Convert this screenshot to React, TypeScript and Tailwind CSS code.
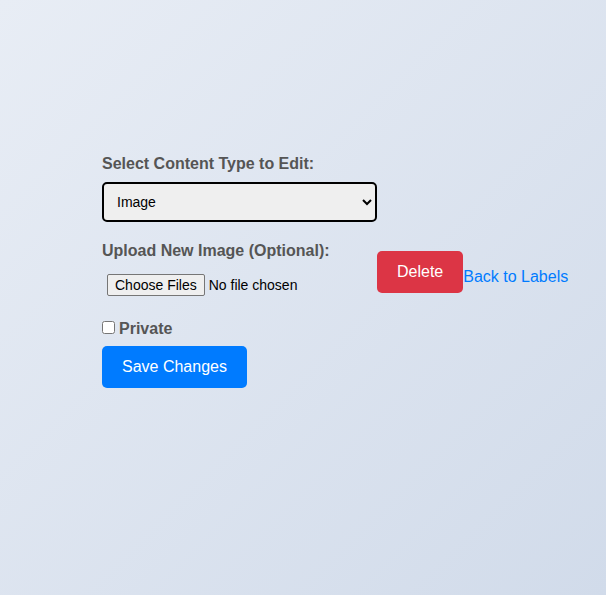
import React from "react";

export default function App() {
  return (
    <div
      className="min-h-screen w-full bg-[linear-gradient(135deg,#e8edf5_0%,#d1dbea_100%)] pl-[102px] pt-[155px]"
      style={{ fontFamily: '"Liberation Sans", Arial, sans-serif' }}
    >
      <div className="flex items-center">
        <form className="w-[275px] flex flex-col" onSubmit={(e) => e.preventDefault()}>
          <label className="block text-[16px] font-bold text-[#555] leading-[18px] mb-[9px]">
            Select Content Type to Edit:
          </label>
          <select
            defaultValue="image"
            className="w-[275px] h-[40px] border-2 border-black rounded-[5px] bg-[#efefef] text-[14px] text-black pl-[9px] pr-[2px] mb-[20px]"
          >
            <option value="image">Image</option>
            <option value="text">Text</option>
          </select>
          <label className="block text-[16px] font-bold text-[#555] leading-[18px] mb-[9px]">
            Upload New Image (Optional):
          </label>
          <input
            type="file"
            multiple
            className="p-[5px] mb-[19px] text-[14px] leading-[16px] text-black file:border file:border-solid file:border-[#767676] file:bg-[#efefef] file:text-black file:px-[7px] file:py-[2px] file:rounded-[2px] file:mr-[4px] file:text-[14px]"
          />
          <label className="flex items-start text-[16px] font-bold text-[#555] leading-[18px] mb-[8px]">
            <input type="checkbox" className="m-0 mt-[1px] mr-[4px] w-[13px] h-[13px]" />
            Private
          </label>
          <button
            type="submit"
            className="self-start bg-[#007bff] text-white text-[16px] leading-[22px] px-[20px] py-[10px] rounded-[5px]"
          >
            Save Changes
          </button>
        </form>
        <button className="bg-[#dc3545] text-white text-[16px] leading-[22px] px-[20px] py-[10px] rounded-[5px]">
          Delete
        </button>
        <a href="#" className="text-[#007bff] text-[16px] leading-[18px] mt-[10px]">
          Back to Labels
        </a>
      </div>
    </div>
  );
}
